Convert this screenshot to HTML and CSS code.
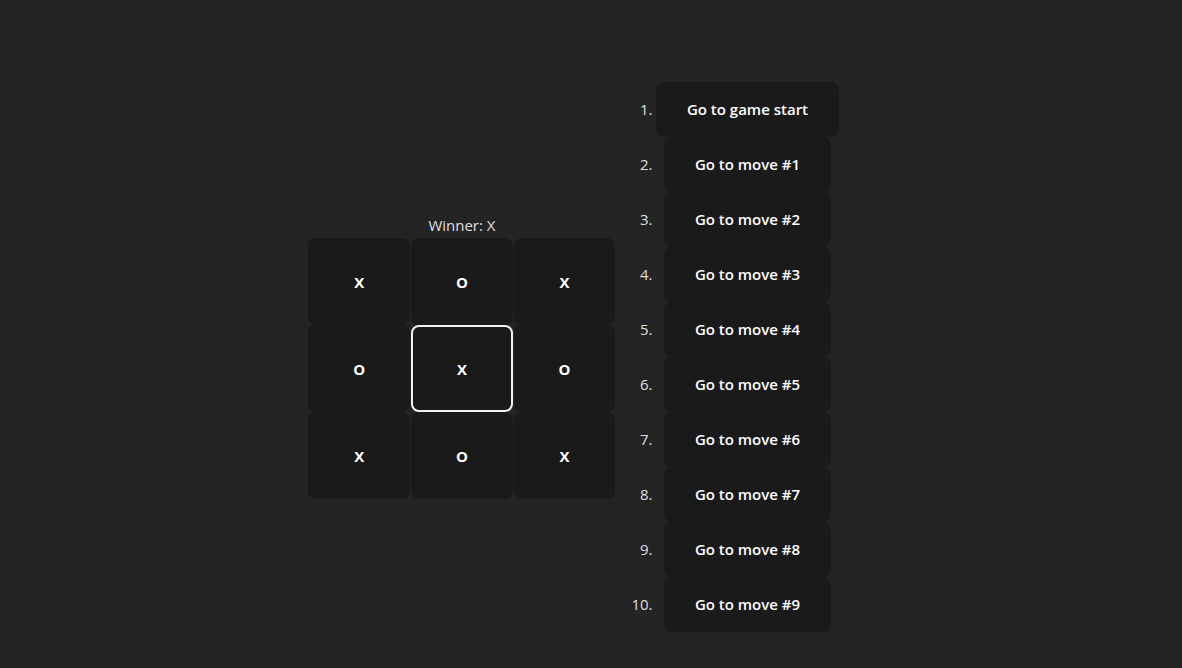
FILE: index.html
```html
<!DOCTYPE html>
<html lang="en">
<head>
<meta charset="utf-8">
<title>Tic-Tac-Toe</title>
<link rel="stylesheet" href="styles.css">
</head>
<body>
<div class="game">
  <div class="game-board">
    <div class="status">Winner: X</div>
    <div class="board">
      <button class="square">X</button>
      <button class="square">O</button>
      <button class="square">X</button>
      <button class="square">O</button>
      <button class="square focused">X</button>
      <button class="square">O</button>
      <button class="square">X</button>
      <button class="square">O</button>
      <button class="square">X</button>
    </div>
  </div>
  <div class="game-info">
    <ol class="moves">
      <li><button class="move">Go to game start</button></li>
      <li><button class="move">Go to move #1</button></li>
      <li><button class="move">Go to move #2</button></li>
      <li><button class="move">Go to move #3</button></li>
      <li><button class="move">Go to move #4</button></li>
      <li><button class="move">Go to move #5</button></li>
      <li><button class="move">Go to move #6</button></li>
      <li><button class="move">Go to move #7</button></li>
      <li><button class="move">Go to move #8</button></li>
      <li><button class="move">Go to move #9</button></li>
    </ol>
  </div>
</div>
</body>
</html>
```
FILE: styles.css
```css
html, body {
  margin: 0;
  padding: 0;
}
body {
  background: #242424;
  color: rgba(255, 255, 255, 0.87);
  font-family: "Open Sans", "Noto Sans", sans-serif;
  font-size: 16px;
  line-height: 1.5;
  min-height: 100vh;
  display: flex;
  align-items: center;
  justify-content: center;
  box-sizing: border-box;
  padding-top: 45px;
  padding-right: 35px;
}
.game {
  display: flex;
  flex-direction: row;
  align-items: center;
}
.game-board {
  width: 307px;
  display: flex;
  flex-direction: column;
}
.status {
  text-align: center;
  height: 24px;
  font-size: 15px;
}
.board {
  display: grid;
  grid-template-columns: repeat(3, 1fr);
  grid-auto-rows: 87px;
  column-gap: 1px;
}
.square {
  box-sizing: border-box;
  background: #1a1a1a;
  color: #fff;
  border: 1px solid transparent;
  border-radius: 8px;
  font-family: inherit;
  font-size: 15px;
  font-weight: 700;
  padding: 0;
  margin: 0;
}
.square.focused {
  border: 2px solid #f2f2f2;
}
.game-info {
  display: flex;
}
.moves {
  margin: 0;
  padding: 0 0 0 41px;
  font-size: 15px;
}
.moves li {
  text-align: center;
  height: 55px;
}
.move {
  box-sizing: border-box;
  height: 55px;
  background: #1a1a1a;
  color: #fff;
  border: 1px solid transparent;
  border-radius: 8px;
  font-family: inherit;
  font-size: 15px;
  font-weight: 600;
  padding: 0 29.5px;
  margin: 0;
}
```
